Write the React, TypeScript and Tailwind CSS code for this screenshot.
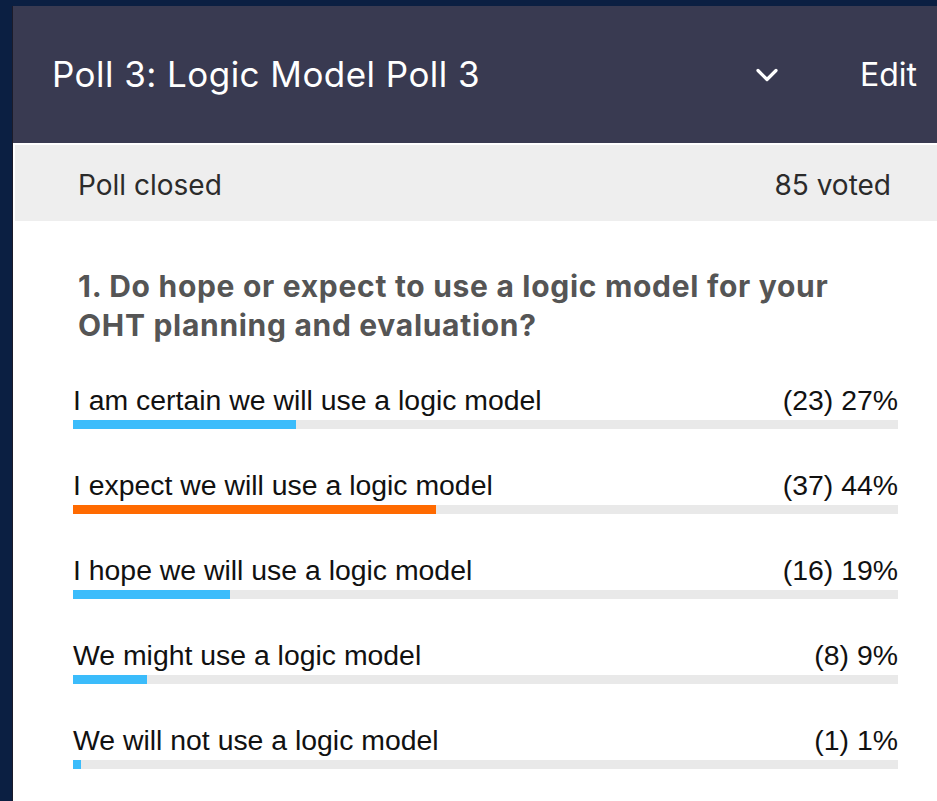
import React from "react";

type Choice = { label: string; count: number; pct: number; top?: boolean };

const choices: Choice[] = [
  { label: "I am certain we will use a logic model", count: 23, pct: 27 },
  { label: "I expect we will use a logic model", count: 37, pct: 44, top: true },
  { label: "I hope we will use a logic model", count: 16, pct: 19 },
  { label: "We might use a logic model", count: 8, pct: 9 },
  { label: "We will not use a logic model", count: 1, pct: 1 },
];

const sf = { fontFamily: "Inter, 'Liberation Sans', sans-serif" };
const arial = { fontFamily: "'Liberation Sans', Arial, sans-serif" };

function ChoiceRow({ c }: { c: Choice }) {
  return (
    <div className="flex flex-col">
      <div
        className="flex items-center justify-between text-[28.4px] leading-[34px] text-[#111111]"
        style={arial}
      >
        <span>{c.label}</span>
        <span>
          ({c.count}) {c.pct}%
        </span>
      </div>
      <div className="mt-[3px] h-[9px] w-full bg-[#e9e9e9]">
        <div
          className={c.top ? "h-full bg-[#ff6a00]" : "h-full bg-[#3bbcfb]"}
          style={{ width: `${c.pct}%` }}
        />
      </div>
    </div>
  );
}

export default function App() {
  return (
    <div className="h-[801px] w-[937px] overflow-hidden bg-[#0b1f42] pl-[12px] pt-[6px]">
      <div className="flex h-[820px] w-[940px] flex-col border-l border-[#1b1b2a] bg-white">
        <div className="flex h-[137px] shrink-0 items-center bg-[#393a51] pl-[39px] text-white">
          <div className="flex-1 text-[35px] tracking-[0.45px]" style={sf}>
            Poll 3: Logic Model Poll 3
          </div>
          <svg
            width="26"
            height="18"
            viewBox="0 0 26 18"
            className="mr-[82px]"
            fill="none"
            stroke="white"
            strokeWidth="3.2"
            strokeLinecap="round"
            strokeLinejoin="round"
          >
            <path d="M6 4.5 L15 13.5 L24 4.5" />
          </svg>
          <div className="pr-[35px] text-[32px]" style={sf}>
            Edit
          </div>
        </div>
        <div
          className="ml-[2px] mt-[2px] flex h-[76px] shrink-0 items-center justify-between bg-[#eeeeee] pl-[63px] pr-[61px] pt-[3px] text-[28px] text-[#2b2b2b]"
          style={sf}
        >
          <span>Poll closed</span>
          <span>85 voted</span>
        </div>
        <div
          className="ml-[65px] mt-[46px] w-[775px] text-[30px] font-bold leading-[39px] tracking-[0.7px] text-[#555555]"
          style={sf}
        >
          1. Do hope or expect to use a logic model for your OHT planning and evaluation?
        </div>
        <div className="ml-[60px] mt-[38px] flex w-[825px] flex-col gap-[39px]">
          {choices.map((c) => (
            <ChoiceRow key={c.label} c={c} />
          ))}
        </div>
      </div>
    </div>
  );
}
